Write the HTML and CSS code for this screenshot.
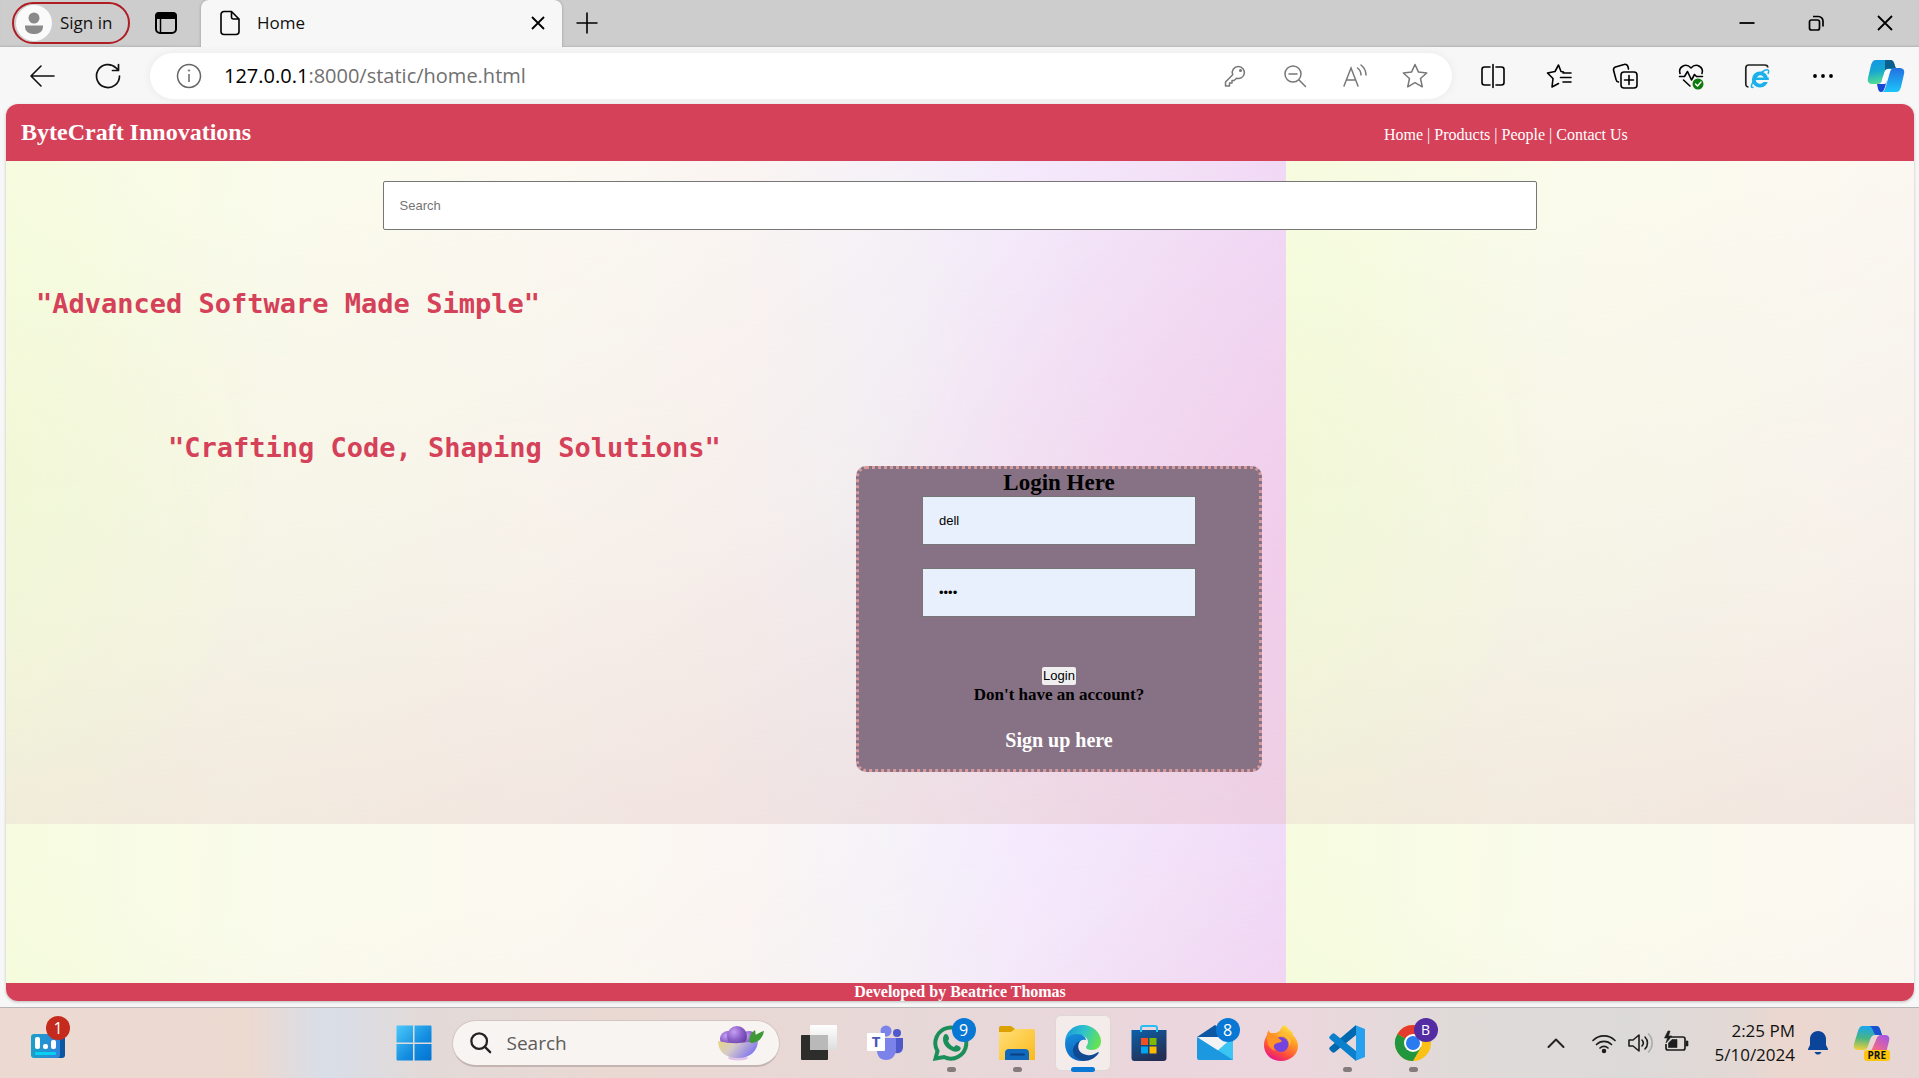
FILE: index.html
```html
<!DOCTYPE html>
<html lang="en">
<head>
<meta charset="utf-8">
<meta name="viewport" content="width=device-width, initial-scale=1">
<title>Home</title>
<link rel="stylesheet" href="styles.css">
</head>
<body>
<div class="desktop">
  <div class="titlebar">
    <button class="signin" type="button">
      <svg class="avatar" viewBox="0 0 36 36" aria-hidden="true"><circle cx="18" cy="18" r="18" fill="#fafafa"/><circle cx="18" cy="13" r="5.5" fill="#8a8a8a"/><path d="M9 20.5h18v1.500a8 7 0 0 1-8 7h-2a8 7 0 0 1-8-7z" fill="#8a8a8a"/></svg>
      <span>Sign in</span>
    </button>
    <button class="icon tab-actions" type="button" aria-label="Tab actions"><svg viewBox="0 0 26 26"><rect x="3" y="3" width="20" height="20" rx="4" fill="none" stroke="#000" stroke-width="2"/><path d="M2 9V6a4 4 0 0 1 4-4h14a4 4 0 0 1 4 4v3z"/><path d="M7.500 9v13" stroke="#000" stroke-width="1.500"/></svg></button>
    <div class="tab">
      <svg class="page-icon" viewBox="0 0 24 26" fill="none" stroke="#000" stroke-width="1.600" aria-hidden="true"><path d="M13.500 1.500H6a3 3 0 0 0-3 3v17a3 3 0 0 0 3 3h12a3 3 0 0 0 3-3V9zM13.500 1.500V7a2 2 0 0 0 2 2H21"/></svg>
      <span>Home</span>
      <button class="icon tab-close" type="button" aria-label="Close tab"><svg viewBox="0 0 26 26" fill="none" stroke="#000" stroke-width="1.800"><path d="M7 7l12 12M19 7L7 19"/></svg></button>
    </div>
    <button class="icon" type="button" aria-label="New tab"><svg viewBox="0 0 26 26" fill="none" stroke="#000" stroke-width="1.600"><path d="M13 2.500v21M2.500 13h21"/></svg></button>
    <div class="window-buttons">
      <button class="icon" type="button" aria-label="Minimize"><svg viewBox="0 0 26 26" stroke="#000" stroke-width="1.800"><path d="M5.500 13h15"/></svg></button>
      <button class="icon" type="button" aria-label="Restore"><svg viewBox="0 0 26 26" fill="none" stroke="#000" stroke-width="1.700"><rect x="6.500" y="10" width="10" height="10" rx="2"/><path d="M10 6.500h5.500a4.500 4.500 0 0 1 4.500 4.500v5.500"/></svg></button>
      <button class="icon" type="button" aria-label="Close"><svg viewBox="0 0 26 26" fill="none" stroke="#000" stroke-width="1.800"><path d="M6 6l14 14M20 6L6 20"/></svg></button>
    </div>
  </div>

  <div class="toolbar">
    <div class="history">
      <button class="icon" type="button" aria-label="Back"><svg viewBox="0 0 26 26" fill="none" stroke="#111" stroke-width="1.600" stroke-linecap="round" stroke-linejoin="round"><path d="M25 13H2M12 3L2 13l10 10"/></svg></button>
      <button class="icon" type="button" aria-label="Refresh"><svg viewBox="0 0 26 26" fill="none" stroke="#111" stroke-width="1.700" stroke-linecap="round" stroke-linejoin="round"><path d="M24.500 13A11.500 11.500 0 1 1 21 4.800L23.500 7M23.500 1.500V7.500H17.500"/></svg></button>
    </div>
    <div class="address">
      <button class="icon" type="button" aria-label="Site information"><svg viewBox="0 0 26 26" fill="none" stroke="#666" stroke-width="1.500"><circle cx="13" cy="13" r="11.500"/><path d="M13 11v8"/><circle cx="13" cy="7.500" r=".8" fill="#666" stroke-width=".6"/></svg></button>
      <div class="url"><b>127.0.0.1</b>:8000/static/home.html</div>
      <div class="address-tools">
        <button class="icon" type="button" aria-label="Passwords"><svg viewBox="0 0 26 26" fill="none" stroke="#777" stroke-width="1.500" stroke-linejoin="round"><path d="M16.500 3.500a6 6 0 1 1-2 11.700L12 17.500H10V20H7.500v3H3.500v-4l7.200-7.300A6 6 0 0 1 16.500 3.500z"/><circle cx="18.500" cy="7.500" r=".8" fill="#777"/></svg></button>
        <button class="icon" type="button" aria-label="Zoom out"><svg viewBox="0 0 26 26" fill="none" stroke="#777" stroke-width="1.500" stroke-linecap="round"><circle cx="11" cy="11" r="8"/><path d="M17 17l6.500 6.500M7 11h8"/></svg></button>
        <button class="icon" type="button" aria-label="Read aloud"><svg viewBox="0 0 26 26" fill="none" stroke="#777" stroke-width="1.500" stroke-linecap="round"><path d="M2 23L9 5l7 18M4.500 17h9M15.500 5a9 9 0 0 1 3.500 7M19 2a13 13 0 0 1 5 10"/></svg></button>
        <button class="icon" type="button" aria-label="Favorite"><svg viewBox="0 0 26 26" fill="none" stroke="#777" stroke-width="1.500" stroke-linejoin="round"><path d="M13 1.500l3.500 7.600 8.200.9-6.200 5.500 1.800 8.300-7.300-4.200-7.300 4.200 1.800-8.300L1.300 10l8.200-.9z"/></svg></button>
      </div>
    </div>
    <div class="extensions">
      <button class="icon" type="button" aria-label="Split screen"><svg viewBox="0 0 26 26" fill="none" stroke="#000" stroke-width="1.600" stroke-linecap="round"><path d="M13 1.500v23M10 4H4.500A2.500 2.500 0 0 0 2 6.500v13A2.500 2.500 0 0 0 4.500 22H10M16 4h5.500A2.500 2.500 0 0 1 24 6.500v13a2.500 2.500 0 0 1-2.500 2.500H16"/></svg></button>
      <button class="icon" type="button" aria-label="Favorites"><svg viewBox="0 0 26 26" fill="none" stroke="#000" stroke-width="1.600" stroke-linecap="round" stroke-linejoin="round"><path d="M17.500 9L15 8.500 12.500 2 9 8.500 1.500 10l5.500 5.500L6 24l6.500-3.500M17 10h8M14.500 14.500H25M17 19h8"/></svg></button>
      <button class="icon" type="button" aria-label="Collections"><svg viewBox="0 0 26 26" fill="none" stroke="#000" stroke-width="1.600" stroke-linecap="round" stroke-linejoin="round"><rect x="9" y="9" width="16" height="16" rx="3"/><path d="M17 12.500v9M12.500 17h9M6.500 19A3 3 0 0 1 4 16.500L1.500 7A3 3 0 0 1 3.500 4L12 1.500A3 3 0 0 1 16 4l.5 2"/></svg></button>
      <button class="icon" type="button" aria-label="Browser essentials"><svg viewBox="0 0 26 26" fill="none" stroke="#000" stroke-width="1.600" stroke-linecap="round" stroke-linejoin="round"><path d="M2 10.500C0 4.500 7.500-1 13 5c5.500-6 13-.5 11 5.500M1.500 13.500h5l3-5 4 8.500 3-5.500 2 2h6M5.500 17l6.500 6"/><circle cx="20" cy="21" r="5.500" fill="#107c10" stroke="none"/><path d="M17.500 21l2 2 3.500-4" stroke="#fff" stroke-width="1.400"/></svg></button>
      <button class="icon" type="button" aria-label="Internet Explorer mode"><svg viewBox="0 0 26 26"><path d="M4.500 24C3 24 1.800 23 1.800 21V5a3 3 0 0 1 3-3h16c2 0 3 1 3 2.500" fill="none" stroke="#222" stroke-width="1.700"/><circle cx="16" cy="16.500" r="6.200" fill="none" stroke="#1ab0ea" stroke-width="3.800"/><path d="M17 19h8v-2.600h-8z" fill="#f7f7f7"/><path d="M11 17h13.800v-2.500H11z" fill="#1ab0ea"/><path d="M9.500 24C5 27 8 17 16 10.500 22 5.500 26.500 5.500 24 11" fill="none" stroke="#1ab0ea" stroke-width="1.500"/></svg></button>
      <button class="icon" type="button" aria-label="More"><svg viewBox="0 0 26 26"><circle cx="5" cy="13" r="1.900"/><circle cx="13" cy="13" r="1.900"/><circle cx="21" cy="13" r="1.900"/></svg></button>
      <button class="icon copilot" type="button" aria-label="Copilot"><svg viewBox="0 0 36 32">
        <defs><linearGradient id="cpA" x1="0" y1="0" x2=".2" y2="1"><stop offset="0" stop-color="#1595e5"/><stop offset=".5" stop-color="#16a8cf"/><stop offset="1" stop-color="#52dd95"/></linearGradient><linearGradient id="cpB" x1="0" y1="0" x2="0" y2="1"><stop offset="0" stop-color="#2370e0"/><stop offset="1" stop-color="#1cc5fb"/></linearGradient></defs>
        <path d="M8 0h14c3 0 4 2 5 6l1 3h-6c-4 0-5 1-6 5l-2 6c-1 3-2 4-5 4H5c-4 0-6-2-5-6L3 5C4 2 5 0 8 0z" fill="url(#cpA)"/><path d="M17 0h5c3 0 4 2 5 6l1 2.500h-6c-3 0-4 .5-5 2z" fill="#0b5f8d"/><path d="M26 8h5c4 0 6 2 5 6l-3 13c-1 3-2 5-5 5H14c2 0 3-3 4-6l4-14c1-3 2-4 4-4z" fill="url(#cpB)"/><path d="M9 24c3 0 4-1 5-4h5l-2 7c-1 3-2 5-4 5-3 0-3-4-4-8z" fill="#1746d8"/><path d="M21 9h2.500c-1 0-1.500 1-2 3l-3 10c-.5 1.500-1 2-3 2H9c3 0 4-1 5-4l2-6c1-4 2-5 5-5z" fill="#fafafa"/></svg></button>
    </div>
  </div>

  <div class="page">
    <header class="site-header">
      <h2 class="brand">ByteCraft Innovations</h2>
      <nav class="site-nav"><a href="#home">Home</a> | <a href="#products">Products</a> | <a href="#people">People</a> | <a href="#contact">Contact Us</a></nav>
    </header>
    <main class="content">
      <input class="search" type="search" placeholder="Search" aria-label="Search">
      <p class="slogan">"Advanced Software Made Simple"</p>
      <p class="slogan slogan-second">"Crafting Code, Shaping Solutions"</p>
      <form class="login">
        <h2 class="login-title">Login Here</h2>
        <input class="field" type="text" value="dell" aria-label="Username">
        <input class="field" type="password" value="dell" aria-label="Password">
        <button class="login-button" type="button">Login</button>
        <p class="no-account">Don't have an account?</p>
        <a class="signup" href="#signup">Sign up here</a>
      </form>
    </main>
    <footer class="site-footer">Developed by Beatrice Thomas</footer>
  </div>

  <div class="taskbar">
    <div class="taskbar-side">
      <button class="app" type="button" aria-label="Widgets"><svg viewBox="0 0 36 36"><defs><linearGradient id="wd"><stop offset="0" stop-color="#1ba0c8"/><stop offset="1" stop-color="#2f83dd"/></linearGradient></defs><path d="M26 12h6a3 3 0 0 1 3 3v17a3 3 0 0 1-3 3h-6z" fill="#0c55a0"/><rect x="1" y="11" width="29" height="24" rx="3" fill="url(#wd)"/><rect x="5" y="14" width="5" height="12" rx="2" fill="#fff"/><rect x="13" y="21" width="5" height="5" rx="2" fill="#fff"/><rect x="21" y="17" width="5" height="9" rx="2" fill="#fff"/><rect x="5" y="29" width="21" height="3" rx="1" fill="#08d0f0"/></svg><span class="badge badge-red">1</span></button>
    </div>
    <div class="apps">
      <button class="app" type="button" aria-label="Start"><svg viewBox="0 0 36 36"><defs><linearGradient id="wn" x1="0" y1="0" x2="1" y2="1" gradientUnits="objectBoundingBox"><stop offset="0" stop-color="#4bc9fa"/><stop offset=".6" stop-color="#128be0"/><stop offset="1" stop-color="#0473d0"/></linearGradient></defs><path d="M1.500.5H17v17H.5v-16a1 1 0 0 1 1-1zM18.500.5h16a1 1 0 0 1 1 1v16h-17zM.5 19H17v16.500H1.500a1 1 0 0 1-1-1zM18.500 19h17v15.500a1 1 0 0 1-1 1h-16z" fill="url(#wn)"/></svg></button>
      <label class="task-search">
        <svg class="lens" viewBox="0 0 24 24" fill="none" stroke="#222" stroke-width="2.500" stroke-linecap="round" aria-hidden="true"><circle cx="10" cy="10" r="8.500"/><path d="M16.500 16.500l5.500 5.500"/></svg>
        <input type="text" placeholder="Search" aria-label="Search Windows">
        <svg class="bowl" viewBox="0 0 46 36" aria-hidden="true"><defs><radialGradient id="ub" cx=".35" cy=".3" r=".8"><stop offset="0" stop-color="#c5a0f2"/><stop offset=".5" stop-color="#8c5fc8"/><stop offset="1" stop-color="#5b379c"/></radialGradient><linearGradient id="bw" x1="0" y1="0" x2="1" y2=".4"><stop offset="0" stop-color="#e8d77e"/><stop offset=".45" stop-color="#d6cbc8"/><stop offset="1" stop-color="#8579ee"/></linearGradient></defs><circle cx="10" cy="14" r="8" fill="url(#ub)"/><circle cx="31" cy="14" r="8" fill="url(#ub)"/><ellipse cx="20" cy="33" rx="10" ry="2.500" fill="#e2c3e8"/><circle cx="19" cy="11" r="10" fill="url(#ub)"/><path d="M0 16q20 5 40-1c0 11-8 18-20 18S0 27 0 16z" fill="url(#bw)"/><path d="M32 18c-2-6 1-10 5-13 1 4 1 9-5 13zM33 18c1-6 6-10 13-12-1 7-6 12-13 12z" fill="#3d9a35"/></svg>
      </label>
      <button class="app" type="button" aria-label="Task view"><svg viewBox="0 0 36 36"><defs><linearGradient id="tv" x1="0" y1="0" x2="0" y2="1"><stop offset="0" stop-color="#fff"/><stop offset="1" stop-color="#ddd"/></linearGradient></defs><rect x="0" y="10" width="27" height="25" rx="1" fill="#2d2d2c"/><rect x="9" y="0" width="27" height="25" rx="1" fill="url(#tv)"/><path d="M9 10h18v15H9z" fill="#b9b9b9"/></svg></button>
      <button class="app" type="button" aria-label="Teams"><svg viewBox="0 0 36 36"><circle cx="19" cy="6" r="5.500" fill="#7b83eb"/><circle cx="30" cy="8" r="4" fill="#5059c9"/><path d="M26 13h10v9c0 4-3 7-7 6l-3-1z" fill="#5059c9"/><path d="M10 13h19v12c0 5-4 10-10 10s-9-4-9-10z" fill="#7b83eb"/><rect x="0" y="8" width="18" height="18" rx="1" fill="#fff"/><text x="9" y="22" class="glyph-t">T</text></svg></button>
      <button class="app running" type="button" aria-label="WhatsApp"><svg viewBox="0 0 36 36"><path d="M2.500 33.500L4.500 26A15.500 15.500 0 1 1 11 32z" fill="none" stroke="#1b8f5a" stroke-width="4"/><path d="M11 10c2-2 4-1 5 3 0 2-1 2-1 3 2 4 4 5 6 6l2-2c4 1 6 3 4 5-4 5-18-2-17-12z" fill="#1b8f5a"/></svg><span class="badge">9</span></button>
      <button class="app running" type="button" aria-label="File Explorer"><svg viewBox="0 0 36 36"><defs><linearGradient id="fe" x1="0" y1="0" x2="1" y2="1"><stop offset="0" stop-color="#ffe079"/><stop offset="1" stop-color="#fcb91c"/></linearGradient></defs><path d="M0 3a2 2 0 0 1 2-2h10l4 3h18v10H0z" fill="#dca000"/><path d="M0 7h12l4-3h18a2 2 0 0 1 2 2v29H0z" fill="url(#fe)"/><path d="M6 35v-7a4 4 0 0 1 4-4h16a4 4 0 0 1 4 4v7z" fill="#1169bd"/><path d="M12 29.500h13" stroke="#0a3f84" stroke-width="2" stroke-linecap="round"/></svg></button>
      <button class="app active" type="button" aria-label="Edge"><svg viewBox="0 0 36 36"><defs><linearGradient id="eg" x1="0" y1=".2" x2="1" y2=".5"><stop offset="0" stop-color="#1b96dc"/><stop offset=".5" stop-color="#2fc3cc"/><stop offset="1" stop-color="#66e352"/></linearGradient><linearGradient id="eb" x1="0" y1="0" x2=".3" y2="1"><stop offset="0" stop-color="#1790dd"/><stop offset="1" stop-color="#0c64bf"/></linearGradient></defs><path d="M0 18C0 7 8 0 18 0s18 8 18 16c0 6-4 9-9 9-4 0-6-1-6-3 0-1 2-2 2-5 0-4-4-7-9-7C7 10 1 13 0 18z" fill="url(#eg)"/><path d="M0 18c1-6 6-9 12-9 5 0 9 3 9 6-4-1-7 1-8 5-2 7 4 12 10 13-2 2-4 3-6 3C7 36 0 29 0 18z" fill="url(#eb)"/><path d="M15 16c-4 6-1 13 7 14 4 1 8-1 11-3 1 0 1 1 0 2-3 4-8 7-14 7-7-1-12-6-11-12 1-4 4-7 7-8z" fill="#114a93"/></svg></button>
      <button class="app" type="button" aria-label="Microsoft Store"><svg viewBox="0 0 36 36"><defs><linearGradient id="ms" x1="0" y1="0" x2=".5" y2="1"><stop offset="0" stop-color="#0b61aa"/><stop offset="1" stop-color="#242f55"/></linearGradient></defs><path d="M10 8V3a2 2 0 0 1 2-2h12a2 2 0 0 1 2 2v5" fill="none" stroke="#28bff5" stroke-width="2"/><path d="M.5 5h35v28a3 3 0 0 1-3 3h-29a3 3 0 0 1-3-3z" fill="url(#ms)"/><path d="M9 7V3h2v4zM25 7V3h2v4z" fill="#28bff5"/><path d="M10 13h7v7h-7z" fill="#f25022"/><path d="M18.500 13h7v7h-7z" fill="#7fba00"/><path d="M10 21.500h7v7h-7z" fill="#00a4ef"/><path d="M18.500 21.500h7v7h-7z" fill="#ffb900"/></svg></button>
      <button class="app" type="button" aria-label="Mail"><svg viewBox="0 0 36 36"><path d="M0 12L18 0l18 12z" fill="#0b58a5"/><path d="M3 12h30v10L18 26 3 19z" fill="#f3f3f3"/><path d="M36 12v23H10z" fill="#3cc4f3"/><path d="M0 12l36 23H2a2 2 0 0 1-2-2z" fill="#1b98df"/></svg><span class="badge">8</span></button>
      <button class="app" type="button" aria-label="Firefox"><svg viewBox="0 0 36 36"><defs><linearGradient id="ff" x1=".8" y1="0" x2=".3" y2="1"><stop offset="0" stop-color="#fff04a"/><stop offset=".4" stop-color="#ff9a26"/><stop offset=".75" stop-color="#ff4a3e"/><stop offset="1" stop-color="#e3158a"/></linearGradient></defs><path d="M22 0c3 3 4 5 6 6 1 1 2 2 2 4 4 4 5 8 5 11 0 8-7 15-17 15S1 29 1 20c0-5 2-8 3-10 0-2 1-4 2-5 0 2 1 3 2 3h5c1-1 3-2 4-2 0-2 2-5 5-6z" fill="url(#ff)"/><circle cx="18" cy="19.500" r="7.500" fill="#7543dd"/><path d="M6 7c2 4 5 5 8 5l5 4c-1 2-4 1-7 3-2 2-2 5 1 7-6-1-9-6-9-12 0-3 1-5 2-7z" fill="#ff9326"/><path d="M14 12c6-4 13 1 12 9 3-3 2-10-3-12-4-2-8 0-9 3z" fill="#ffbd36"/></svg></button>
      <button class="app running" type="button" aria-label="Visual Studio Code"><svg viewBox="0 0 36 36"><path d="M27 0v10L6 27c-1 1-2 1-3 0l-2-2c-1-1-1-2 0-3z" fill="#0068ae"/><path d="M27 36V26L6 9C5 8 4 8 3 9l-2 2c-1 1-1 2 0 3z" fill="#0a7fcb"/><path d="M26 0l10 4v28l-10 4c1 0 1-1 1-2V2c0-1 0-2-1-2z" fill="#27a1ed"/></svg></button>
      <button class="app running" type="button" aria-label="Chrome"><svg viewBox="0 0 36 36"><circle cx="18" cy="18" r="18" fill="#fbc116"/><path d="M18 18L2.400 9A18 18 0 0 1 33.600 9H18z" fill="#e43b2e"/><path d="M2.400 9A18 18 0 0 0 18 36l7.800-13.500L18 18z" fill="#22953f"/><circle cx="18" cy="18" r="9" fill="#fff"/><circle cx="18" cy="18" r="7" fill="#2a7af0"/></svg><span class="badge badge-purple">B</span></button>
    </div>
    <div class="tray">
      <button class="icon chevron" type="button" aria-label="Show hidden icons"><svg viewBox="0 0 26 26" fill="none" stroke="#222" stroke-width="2" stroke-linecap="round" stroke-linejoin="round"><path d="M5.500 17L13 9.500l7.500 7.500"/></svg></button>
      <div class="status">
        <svg viewBox="0 0 26 26" fill="none" stroke="#1d1d1d" stroke-width="1.700" stroke-linecap="round" role="img" aria-label="Wi-Fi"><path d="M2 10.500a15.500 15.500 0 0 1 22 0M5.500 14.500a10.500 10.500 0 0 1 15 0M9 18a5.700 5.700 0 0 1 8 0"/><circle cx="13" cy="21" r="1.400" fill="#1d1d1d"/></svg>
        <svg viewBox="0 0 26 26" fill="none" stroke="#1d1d1d" stroke-width="1.600" stroke-linecap="round" stroke-linejoin="round" role="img" aria-label="Volume"><path d="M2 10h4l6-5v16l-6-5H2zM15 10a4.500 4.500 0 0 1 0 6M18 7a8.500 8.500 0 0 1 0 12"/><path d="M21.500 4a13 13 0 0 1 0 18" stroke="#aaa"/></svg>
        <svg viewBox="0 0 26 26" fill="none" stroke="#1d1d1d" stroke-width="1.700" role="img" aria-label="Battery"><path d="M8 7h12a2 2 0 0 1 2 2v9a2 2 0 0 1-2 2H5a2 2 0 0 1-2-2v-4"/><path d="M9 9.500h5v8H5.500V13zM23 11h2v5h-2zM5 1L1.500 8h3L3 13l6-7H5.500L7 1z" fill="#1d1d1d" stroke-width=".6"/></svg>
      </div>
      <div class="clock"><div>2:25 PM</div><div>5/10/2024</div></div>
      <svg class="bell" viewBox="0 0 22 24" fill="#0b4599" role="img" aria-label="Notifications"><path d="M11 0c5 0 8 4 8 8v6l2 4c0 1 0 1-1 1H2c-1 0-1 0-1-1l2-4V8c0-4 3-8 8-8zM7.500 21h7c-1 2-2 2.500-3.500 2.500S8.500 23 7.500 21z"/></svg>
      <button class="app pre" type="button" aria-label="Copilot preview"><svg viewBox="0 0 36 36"><defs><linearGradient id="pa" x1=".3" y1="0" x2=".2" y2="1"><stop offset="0" stop-color="#18a5ee"/><stop offset=".5" stop-color="#49b584"/><stop offset="1" stop-color="#f2d03a"/></linearGradient><linearGradient id="pb" x1="1" y1="0" x2=".3" y2="1"><stop offset="0" stop-color="#9b55ef"/><stop offset="1" stop-color="#ff6b7b"/></linearGradient></defs><path d="M9 1h13c3 0 4 2 5 6l1 3h-6c-4 0-5 2-6 5l-2 6c-1 3-2 4-5 4H5c-4 0-6-2-5-6L4 6c1-3 2-5 5-5z" fill="url(#pa)"/><path d="M16 1h6c3 0 4 2 5 6l1 3h-6c-3-1-2-6-6-9z" fill="#1b50d0"/><path d="M28 10h3c4 0 5 3 4 6l-3 12H16l2-4 4-9c1-3 2-5 6-5z" fill="url(#pb)"/></svg><span class="pre-label">PRE</span></button>
    </div>
  </div>
</div>
</body>
</html>
```
FILE: styles.css
```css
* {
  box-sizing: border-box;
}

body {
  margin: 0;
  font-family: "Open Sans", "Noto Sans", sans-serif;
  color: #111;
}

button {
  margin: 0;
  padding: 0;
  border: 0;
  background: none;
  font: inherit;
  color: inherit;
}

svg {
  display: block;
}

h2,
p {
  margin: 0;
}

.desktop {
  display: flex;
  flex-direction: column;
  min-height: 100vh;
  background: #f7f7f7;
}

.icon {
  flex: none;
  width: 26px;
  height: 26px;
}

.icon svg {
  width: 100%;
  height: 100%;
  overflow: visible;
}

/* Browser title bar */

.titlebar {
  display: flex;
  align-items: center;
  height: 47px;
  padding: 0 0 2px 12px;
  background: #cdcdcd;
  box-shadow: inset 0 -2px 2px -1px #b4b4b4;
}

.signin {
  display: flex;
  align-items: center;
  gap: 8px;
  width: 118px;
  height: 42px;
  padding-left: 2px;
  border: 2px solid #b01c24;
  border-radius: 21px;
  font-size: 17px;
}

.avatar {
  width: 36px;
  height: 36px;
}

.tab-actions {
  margin: 0 22px 0 23px;
}

.tab {
  display: flex;
  align-items: center;
  width: 361px;
  height: 47px;
  margin: 0 12px -2px 0;
  padding: 0 11px 2px 17px;
  border-radius: 8px 8px 0 0;
  background: #f7f7f7;
  box-shadow: 0 0 3px #999;
  clip-path: inset(0 -4px 0 -4px);
  font-size: 17px;
}

.page-icon {
  width: 24px;
  height: 26px;
  margin-right: 15px;
}

.tab-close {
  margin-left: auto;
}

.window-buttons {
  display: flex;
  gap: 43px;
  margin-left: auto;
  padding-right: 21px;
}

/* Browser toolbar */

.toolbar {
  display: flex;
  align-items: center;
  height: 57px;
  padding: 0 15px 0 29px;
}

.history {
  display: flex;
  gap: 40px;
  margin-right: 29px;
}

.address {
  display: flex;
  flex: 1;
  align-items: center;
  height: 46px;
  padding: 0 24px 0 26px;
  border-radius: 23px;
  background: #fff;
  box-shadow: 0 0 8px #e8e8e8;
}

.url {
  flex: 1;
  margin-left: 22px;
  font-size: 20px;
  color: #707070;
}

.url b {
  font-weight: 400;
  color: #000;
}

.address-tools {
  display: flex;
  gap: 34px;
}

.extensions {
  display: flex;
  align-items: center;
  gap: 40px;
  margin-left: 28px;
}

.copilot {
  width: 36px;
  height: 32px;
  margin-left: -8px;
}

/* Web page */

.page {
  display: flex;
  flex: 1;
  flex-direction: column;
  margin: 0 5px 6px 6px;
  border-radius: 12px;
  overflow: hidden;
  box-shadow: 0 1px 3px #bbb;
  font-family: "Liberation Serif", "Times New Roman", serif;
  background-color: #fbfbee;
  background-image:
    radial-gradient(ellipse 36% 60% at 104% 62%, rgba(244, 196, 236, 0.6), rgba(244, 196, 236, 0)),
    radial-gradient(ellipse 24% 50% at -3% 52%, rgba(238, 250, 205, 0.5), rgba(238, 250, 205, 0)),
    linear-gradient(172deg, rgba(228, 212, 206, 0) 15%, rgba(231, 220, 212, 0.25) 58%, rgba(230, 206, 202, 0.5) 98%),
    linear-gradient(94deg, #f7fce0 0%, #fafbec 22%, #fcf9f1 42%, #fbf5f3 56%, #f6f3f9 66%, #f5eafe 77%, #f3e0fa 90%, #f0d7f8 100%);
  background-size: 1280px 720px;
}

.site-header {
  display: flex;
  align-items: center;
  height: 57px;
  padding-left: 15px;
  background: #d54159;
  color: #fff;
}

.brand {
  width: 1363px;
  padding-bottom: 2px;
  font-size: 24px;
  line-height: 28px;
}

.site-nav {
  padding-top: 4px;
  font-size: 16px;
  line-height: 18px;
}

.site-nav a {
  color: inherit;
  text-decoration: none;
}

.content {
  display: flex;
  flex: 1;
  flex-direction: column;
  padding-top: 20px;
}

.search {
  align-self: center;
  width: calc(60% + 10px);
  height: 49px;
  padding: 0 16px;
  border: 1px solid #767676;
  border-radius: 2px;
  outline: 0;
  background: #fff;
  font: 13px "Liberation Sans", Arial, sans-serif;
  appearance: none;
}

.search::placeholder {
  color: #757575;
}

.slogan {
  margin: 58px 0 0 30px;
  font-family: Consolas, "DejaVu Sans Mono", monospace;
  font-size: 27px;
  font-weight: 700;
  line-height: 32px;
  color: #d54159;
}

.slogan-second {
  margin: 112px 0 0 162px;
}

.login {
  display: flex;
  flex-direction: column;
  align-items: center;
  width: 406px;
  margin: 2px 0 0 850px;
  padding-bottom: 16px;
  border: 3px dotted #d99a9c;
  border-radius: 10px;
  background: #877285;
  color: #000;
}

.login-title {
  font-size: 23px;
  line-height: 27px;
}

.field {
  width: 274px;
  height: 49px;
  margin-bottom: 23px;
  padding: 0 16px;
  border: 1px solid #767676;
  border-radius: 0;
  outline: 0;
  background: #e8f0fe;
  color: #000;
  font: 13px "Liberation Sans", Arial, sans-serif;
}

.login-button {
  height: 18px;
  margin-top: 27px;
  padding: 0 1px;
  border-radius: 2px;
  background: #efefef;
  font: 13px/18px "Liberation Sans", Arial, sans-serif;
}

.no-account {
  font-size: 17px;
  font-weight: 700;
  line-height: 20px;
}

.signup {
  margin-top: 22px;
  color: #fff;
  font-size: 20px;
  font-weight: 700;
  line-height: 26px;
  text-decoration: none;
}

.site-footer {
  height: 18px;
  background: #d54159;
  color: #fff;
  font-size: 16px;
  font-weight: 700;
  line-height: 18px;
  text-align: center;
}

/* Desktop taskbar */

.taskbar {
  display: grid;
  grid-template-columns: 1fr auto 1fr;
  align-items: center;
  height: 71px;
  padding: 0 29px 0 30px;
  border-top: 1px solid #b9b5b4;
  background: linear-gradient(90deg, #ecd9d1 0%, #ecd9d0 13%, #d8dee8 17%, #e2dad8 22%, #ead8d2 32%, #e7d8d8 48%, #ead6dc 60%, #ebd7dd 68%, #dfdad8 76%, #dcdad9 85%, #e3d8d4 91%, #ecd7ce 93%, #e6d6d4 100%);
}

.app {
  position: relative;
  width: 36px;
  height: 36px;
}

.app svg {
  width: 36px;
  height: 36px;
  overflow: visible;
}

.apps {
  display: flex;
  align-items: center;
  gap: 30px;
  margin-right: 94px;
}

.task-search {
  display: flex;
  align-items: center;
  width: 328px;
  height: 47px;
  margin: 0 -9px 0 -10px;
  padding: 0 15px 0 17px;
  border: 1px solid #d3c5c2;
  border-bottom: 2px solid #c4b4b2;
  border-radius: 24px;
  background: #f8f4f2;
}

.task-search input {
  flex: 1;
  min-width: 0;
  margin-left: 15px;
  padding: 0;
  border: 0;
  outline: 0;
  background: none;
  font: 19px "Open Sans", "Noto Sans", sans-serif;
}

.task-search input::placeholder {
  color: #5c5a59;
}

.lens {
  width: 22px;
  height: 22px;
}

.bowl {
  width: 46px;
  height: 36px;
}

.glyph-t {
  font: 700 15px "Open Sans", sans-serif;
  text-anchor: middle;
  fill: #4b53bc;
}

.badge {
  position: absolute;
  top: -7px;
  right: -7px;
  width: 24px;
  height: 24px;
  border-radius: 50%;
  background: #0878d4;
  color: #fff;
  font-size: 16px;
  line-height: 24px;
  text-align: center;
}

.badge-red {
  right: -4px;
  background: #c42b1c;
}

.badge-purple {
  background: #532ba2;
  font-size: 14px;
}

.running::after {
  content: "";
  position: absolute;
  bottom: -11px;
  left: 14px;
  width: 9px;
  height: 5px;
  border-radius: 3px;
  background: #857b7b;
}

.active::before {
  content: "";
  position: absolute;
  inset: -10px;
  border: 1px solid #e0d6d6;
  border-radius: 6px;
  background: #f4ebeb;
}

.active svg {
  position: relative;
}

.active::after {
  content: "";
  position: absolute;
  bottom: -11px;
  left: 6px;
  width: 24px;
  height: 5px;
  border-radius: 3px;
  background: #0878d4;
}

.tray {
  display: flex;
  align-items: center;
  justify-content: flex-end;
}

.status {
  display: flex;
  gap: 10px;
  margin: 0 25px 0 22px;
}

.status svg {
  width: 26px;
  height: 26px;
}

.clock {
  font-size: 17px;
  line-height: 24px;
  text-align: right;
}

.bell {
  width: 22px;
  height: 24px;
  margin: 0 25px 0 12px;
}

.pre-label {
  position: absolute;
  right: 0;
  bottom: 0;
  padding: 0 4px;
  border-radius: 3px;
  background: #fdc50c;
  font-size: 10px;
  font-weight: 700;
  line-height: 11px;
}
```
